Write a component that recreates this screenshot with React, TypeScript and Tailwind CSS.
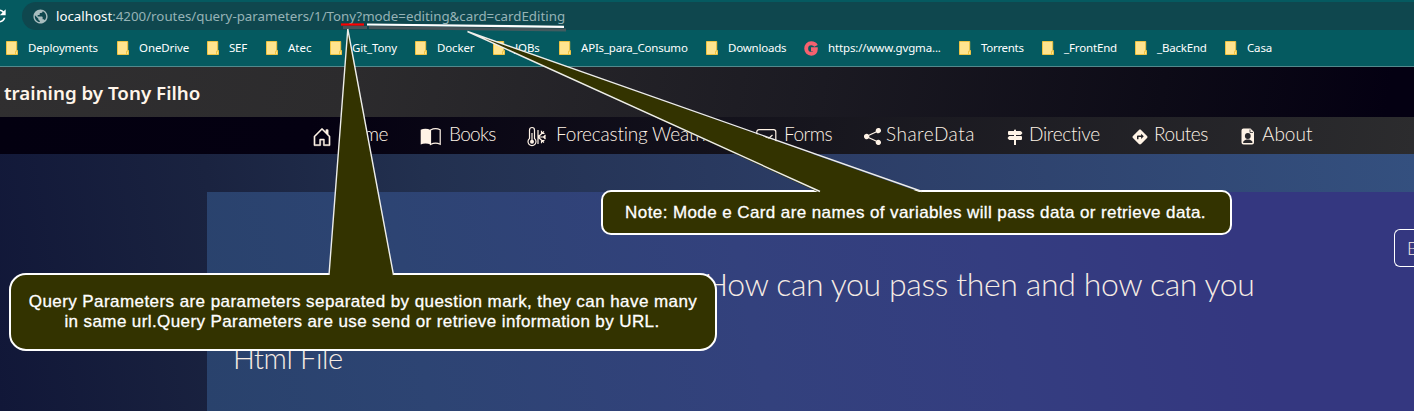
import type { ReactNode } from "react";
import { MdDirections, MdPublic, MdRefresh } from "react-icons/md";
import { BsHouseDoor, BsSignpost2Fill, BsShareFill } from "react-icons/bs";

type Bookmark = { label: string; width: string; spacing: string; brand?: boolean };

const bookmarks: Bookmark[] = [
  { label: "Deployments", width: "w-[111px]", spacing: "tracking-[-0.15px]" },
  { label: "OneDrive", width: "w-[90px]", spacing: "tracking-[-0.1px]" },
  { label: "SEF", width: "w-[59px]", spacing: "tracking-[-0.2px]" },
  { label: "Atec", width: "w-[64px]", spacing: "tracking-[0px]" },
  { label: "Git_Tony", width: "w-[85px]", spacing: "tracking-[-0.15px]" },
  { label: "Docker", width: "w-[78px]", spacing: "tracking-[-0.15px]" },
  { label: "JOBs", width: "w-[66px]", spacing: "tracking-[-0.1px]" },
  { label: "APIs_para_Consumo", width: "w-[147px]", spacing: "tracking-[-0.2px]" },
  { label: "Downloads", width: "w-[99px]", spacing: "tracking-[-0.2px]" },
  { label: "https://www.gvgma...", width: "w-[154px]", spacing: "tracking-[-0.15px]", brand: true },
  { label: "Torrents", width: "w-[83px]", spacing: "tracking-[-0.3px]" },
  { label: "_FrontEnd", width: "w-[93px]", spacing: "tracking-[-0.15px]" },
  { label: "_BackEnd", width: "w-[90px]", spacing: "tracking-[-0.2px]" },
  { label: "Casa", width: "w-[60px]", spacing: "tracking-[-0.15px]" },
];

function Folder() {
  return (
    <svg width="12" height="14" viewBox="0 0 12 14">
      <path d="M.5.5h10.2v9h.8v4H.5z" fill="#ffe48f" stroke="#efc443" />
      <path d="M9.5 13.5v-3.3h2" fill="none" stroke="#efc443" />
    </svg>
  );
}

function BrandG() {
  return (
    <svg width="14" height="15" viewBox="0 0 14 15">
      <path
        d="M12 4.800C11 2.800 9.200 2.200 7.200 2.200 4.200 2.200 2.200 4.500 2.200 7.500s2 5.300 5 5.300c2.800 0 4.600-1.800 4.600-4.600H7"
        fill="none"
        stroke="#f5616f"
        strokeWidth="3.9"
      />
    </svg>
  );
}

function BookIcon() {
  return (
    <svg width="21" height="18" viewBox="0 0 21 18">
      <path d="M.7 1.800C3.500.4 7.500.4 10.500 2v14.500C7.500 15 3.500 15 .7 16.500z" fill="#fff3e6" />
      <path d="M10.500 2c3-1.600 7-1.600 9.700-.2v14.500c-2.700-1.300-6.700-1.300-9.700.2z" fill="none" stroke="#fff3e6" strokeWidth="1.200" />
    </svg>
  );
}

function WeatherIcon() {
  return (
    <svg width="20" height="22" viewBox="0 0 20 22" fill="none" stroke="#fff3e6" strokeWidth="1.200">
      <path d="M2.500 12.500V4a2.500 2.500 0 0 1 5 0v8.500a4 4 0 1 1-5 0z" />
      <path d="M5 7v8" />
      <circle cx="5" cy="15.800" r="2" fill="#fff3e6" stroke="none" />
      <path d="M11 4v14M11 11h8M11 11l6-5.500M11 11l6 5.500M14.500 4.800v2.700h3M14.500 17.200v-2.700h3M18.500 9l-2 2 2 2" />
    </svg>
  );
}

function FormIcon() {
  return (
    <svg width="21" height="18" viewBox="0 0 21 18" fill="none" stroke="#fff3e6" strokeWidth="1.200">
      <rect x=".8" y="1.600" width="19" height="14.500" rx="2.200" />
      <path d="M9.500 9l2.500 2 4.500-4" />
    </svg>
  );
}

function ProfileIcon() {
  return (
    <svg width="14" height="17" viewBox="0 0 14 17">
      <path d="M2.500.5h7L13 4v10.500a2 2 0 0 1-2 2H2.500a2 2 0 0 1-2-2v-12a2 2 0 0 1 2-2z" fill="#fff3e6" />
      <path d="M9 1.500v3h3" fill="none" stroke="#28272b" strokeWidth=".8" />
      <circle cx="6.800" cy="8" r="2.900" fill="#28272b" />
      <path d="M2.200 15v-1.200c1-1.700 2.800-2.300 4.600-2.300s3.600.6 4.600 2.300V15z" fill="#28272b" />
    </svg>
  );
}

type NavItem = { label: string; width: string; icon: ReactNode; iconBox: string; spacing: string };

const navItems: NavItem[] = [
  { label: "Home", width: "w-[107px]", iconBox: "w-[27px] -ml-px mr-px", icon: <BsHouseDoor size={20} strokeWidth={0.3} />, spacing: "tracking-[-0.5px]" },
  { label: "Books", width: "w-[107px]", iconBox: "w-[29px]", icon: <BookIcon />, spacing: "tracking-[-0.7px]" },
  { label: "Forecasting Weather", width: "w-[229px]", iconBox: "w-[29px]", icon: <WeatherIcon />, spacing: "tracking-[-0.2px]" },
  { label: "Forms", width: "w-[107px]", iconBox: "w-[28px]", icon: <FormIcon />, spacing: "tracking-[-0.5px]" },
  { label: "ShareData", width: "w-[143px]", iconBox: "w-[23px]", icon: <BsShareFill size={17} className="ml-px" />, spacing: "tracking-[0.5px]" },
  { label: "Directive", width: "w-[125px]", iconBox: "w-[23px]", icon: <BsSignpost2Fill size={16} className="ml-px mt-px" />, spacing: "tracking-[-0.3px]" },
  { label: "Routes", width: "w-[109px]", iconBox: "w-[23px]", icon: <MdDirections size={18} />, spacing: "tracking-[-0.4px]" },
  { label: "About", width: "w-[90px]", iconBox: "w-[22px]", icon: <span className="pl-px"><ProfileIcon /></span>, spacing: "tracking-[0px]" },
];

function BrowserChrome() {
  return (
    <div className="flex h-[67px] flex-col border-b border-[#52898c] bg-[#055a60] font-['Noto_Sans',sans-serif]">
      <div className="flex h-[30px] items-end">
        <div className="flex h-7 w-[22px] shrink-0 items-center">
          <MdRefresh size={20} className="-ml-[11px] text-white" />
        </div>
        <div className="flex h-7 w-[1392px] shrink-0 items-center rounded-l-full bg-[#0f474e] pl-[10px] text-[13.3px] text-[#96b3b6]">
          <MdPublic size={17} className="mr-[7px] shrink-0 text-[#a9bdbf]" />
          <span className="whitespace-nowrap pt-px">
            <span className="text-white">localhost</span>:4200/routes/query-parameters/1/Tony?mode=editing&amp;card=cardEditing
          </span>
        </div>
      </div>
      <div className="flex h-9 items-center pl-[6px] text-[11.5px] text-white">
        {bookmarks.map((b) => (
          <div key={b.label} className={`flex shrink-0 items-center ${b.width}`}>
            <span className={b.brand ? "w-[23px] shrink-0 -ml-px mr-px" : "w-[22px] shrink-0"}>{b.brand ? <BrandG /> : <Folder />}</span>
            <span className={`whitespace-nowrap ${b.spacing}`}>{b.label}</span>
          </div>
        ))}
      </div>
    </div>
  );
}

function Nav() {
  return (
    <nav className="flex h-[37px] items-start bg-[linear-gradient(100deg,#030010_0%,#040011_22%,#17161e_58%,#2c2c2e_100%)] pl-[313px] font-['Lato',sans-serif] text-[19px] font-light text-[#fff3e6]">
      {navItems.map((n) => (
        <a key={n.label} className={`flex h-[36px] shrink-0 items-center ${n.width}`}>
          <span className={`flex shrink-0 pt-[3px] ${n.iconBox}`}>{n.icon}</span>
          <span className={`whitespace-nowrap pb-[2px] ${n.spacing}`}>{n.label}</span>
        </a>
      ))}
    </nav>
  );
}

function Annotations() {
  return (
    <div className="pointer-events-none absolute inset-0 overflow-hidden font-['Liberation_Sans',sans-serif] text-[17px] leading-5 text-white [-webkit-text-stroke:0.3px_white]">
      <div className="absolute left-[9px] top-[273px] flex h-[78px] w-[708px] flex-col items-center rounded-[17px] border-[2.5px] border-white bg-[#333300] pt-[17px]">
        <p className="whitespace-nowrap tracking-[0.43px]">Query Parameters are parameters separated by question mark, they can have many</p>
        <p className="whitespace-nowrap pr-[2px] tracking-[0.4px]">in same url.Query Parameters are use send or retrieve information by URL.</p>
      </div>
      <div className="absolute left-[601px] top-[190px] flex h-[45px] w-[631px] justify-center rounded-[10px] border-[2.5px] border-white bg-[#333300] pr-[2px] pt-[11px]">
        <p className="whitespace-nowrap tracking-[0.41px]">Note: Mode e Card are names of variables will pass data or retrieve data.</p>
      </div>
      <svg className="absolute inset-0" width="1414" height="411" fill="none">
        <path d="M329 276L347.800 29 393.500 276z" fill="#333300" />
        <path d="M329 275L347.800 29 393.500 275" stroke="#eeeeea" strokeWidth="1.400" />
        <path d="M820 193L467.500 31.500 922 193z" fill="#333300" />
        <path d="M820 191.500L467.500 31.500 922 191.500" stroke="#eeeeea" strokeWidth="1.400" />
        <path d="M343 27.500h24M369 27.500l197 2.500" stroke="#6b5e60" strokeOpacity=".6" strokeWidth="3" />
        <path d="M341 24.500h23" stroke="#ff0000" strokeWidth="2.200" />
        <path d="M367 24.500l197 2.300" stroke="#ffffff" strokeWidth="2.200" />
      </svg>
    </div>
  );
}

export default function App() {
  return (
    <div className="relative flex h-[411px] w-[1414px] flex-col overflow-hidden">
      <BrowserChrome />
      <header className="flex h-[50px] items-center bg-[linear-gradient(100deg,#302f30_0%,#2c2b2d_25%,#1b1a22_58%,#0d0b17_82%,#040012_98%)] pl-[4px] font-['Noto_Sans',sans-serif] text-[18.75px] font-semibold text-[#fff5ea]">
        <span className="pt-[3px]">training by Tony Filho</span>
      </header>
      <Nav />
      <main className="flex flex-1 bg-[linear-gradient(80deg,#111738_0%,#1a2340_17%,#22304f_32%,#2c3d66_60%,#34507f_100%)] pl-[207px] pt-[38px]">
        <section className="flex flex-1 flex-col bg-[linear-gradient(78deg,#29426c_0%,#2d4473_18%,#33417d_45%,#343d80_65%,#343780_85%)] font-['Lato',sans-serif] text-[32px] font-light leading-[40px] text-[#f6ece4]">
          <div className="flex h-[75px] shrink-0 justify-end overflow-hidden pt-[37px]">
            <button className="h-[38px] w-[20px] shrink-0 overflow-hidden rounded-l-[6px] border border-r-0 border-white pl-[12px] text-left text-[18px] leading-[32px]">B</button>
          </div>
          <h1 className="-mt-[3px] flex h-[75px] shrink-0 pl-[232px] font-light whitespace-nowrap">
            <span className="w-[265px] tracking-[-0.4px]">Query Parameters</span>
            <span className="tracking-[-0.38px]">How can you pass then and how can you</span>
          </h1>
          <h2 className="-mt-px pl-[26px] text-[29px] font-light tracking-[-0.4px]">Html File</h2>
        </section>
      </main>
      <Annotations />
    </div>
  );
}
